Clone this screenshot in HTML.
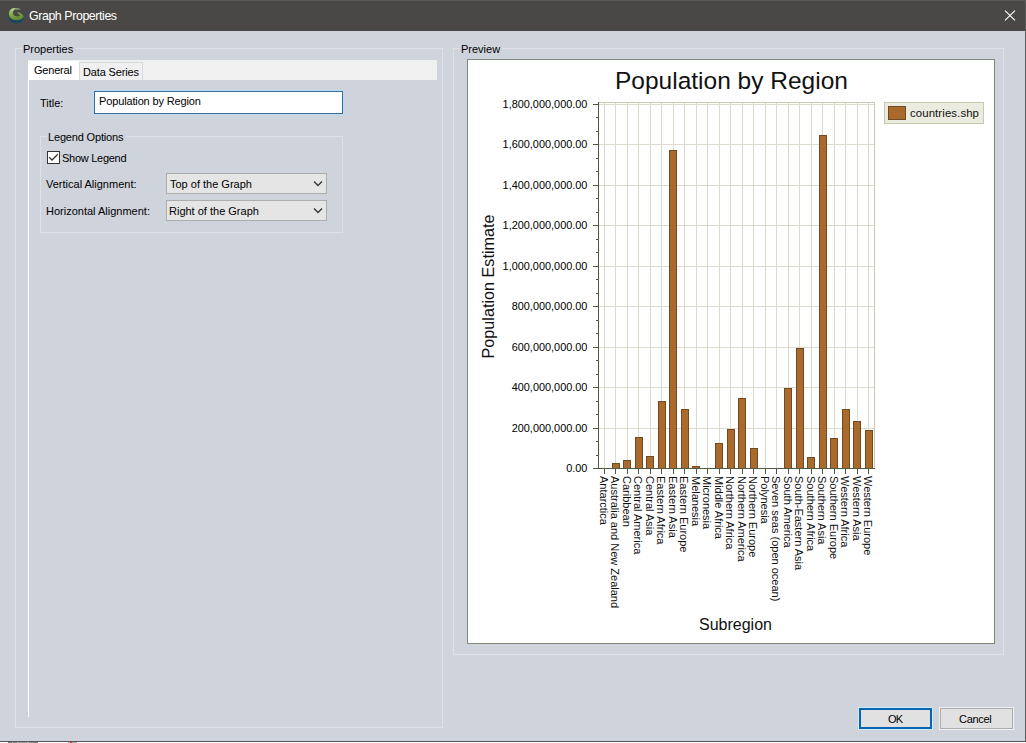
<!DOCTYPE html>
<html><head><meta charset="utf-8">
<style>
html,body{margin:0;padding:0}
body{width:1026px;height:743px;overflow:hidden;position:relative;background:#cfd3dc;font-family:"Liberation Sans",sans-serif;font-size:11px;color:#000}
.a{position:absolute}
.t{position:absolute;white-space:nowrap;line-height:11px;font-size:11px}
#titlebar{left:0;top:0;width:1026px;height:31px;background:#4a4846;border-top:1px solid #5c5b5a;box-sizing:border-box}
.gb{position:absolute;border:1px solid #dde0e6;box-sizing:border-box}
.gbl{position:absolute;background:#cfd3dc;padding:0 2px 0 1px;white-space:nowrap;line-height:11px}
.combo{position:absolute;background:#e5e5e5;border:1px solid #adadad;box-sizing:border-box}
.btn{position:absolute;box-sizing:border-box;background:#e1e1e1;text-align:center}
</style></head><body>
<div id="titlebar" class="a">
  <svg class="a" style="left:5px;top:3px" width="24" height="24" viewBox="0 0 24 24">
    <defs><linearGradient id="ig" x1="0" y1="0" x2="0.3" y2="1"><stop offset="0" stop-color="#c4d4a8"/><stop offset="0.45" stop-color="#8fb055"/><stop offset="1" stop-color="#5f8a30"/></linearGradient></defs>
    <path d="M3.4 10.5 Q3.3 16.5 7.5 18.8 Q11 20.4 15 18.8 Q18.6 16.8 18.8 12.5 Q17.5 16 12.5 16.4 Q6.5 16.6 3.4 10.5 Z" fill="#16475e"/>
    <path d="M8.4 4 L15.2 4.7 L15.4 5.6 L9.6 5.6 Q7.6 7.4 7.8 9.8 Q8.8 12.4 12 12.5 Q14.2 12.4 15.2 11.4 L12.3 8.6 L12.9 8.1 Q17 9.6 18.8 12.2 Q17.6 15.7 12.2 16.1 Q6.3 16.1 4.3 12.2 Q3.3 8.2 5 6 Q6.5 4.4 8.4 4 Z" fill="url(#ig)"/>
  </svg>
  <div class="t" style="left:29px;top:9px;font-size:12.4px;line-height:13px;letter-spacing:-0.42px;color:#fff">Graph Properties</div>
  <svg class="a" style="left:1000px;top:5px" width="20" height="20"><path d="M5 4.6 L15 14.3 M15 4.6 L5 14.3" stroke="#fff" stroke-width="1.1"/></svg>
</div>
<div class="a" style="left:1025px;top:0;width:1px;height:741px;background:#5a5a5a"></div>
<div class="a" style="left:0;top:741px;width:1026px;height:1px;background:#555"></div>
<div class="a" style="left:0;top:742px;width:1026px;height:1px;background:#fff"></div>
<div class="a" style="left:8px;top:742px;width:30px;height:1px;background:linear-gradient(90deg,#777 0 4px,#ccc 4px 5px,#888 5px 9px,#bbb 9px 11px,#999 11px 19px,#ccc 19px 21px,#888 21px 30px)"></div>
<div class="a" style="left:68px;top:742px;width:9px;height:1px;background:linear-gradient(90deg,#bbb 0 2px,#d33 2px 4px,#aaa 4px 9px)"></div>

<!-- Properties group -->
<div class="gb" style="left:15px;top:48px;width:428px;height:680px"></div>
<div class="gbl" style="left:22px;top:44px">Properties</div>
<!-- tab strip -->
<div class="a" style="left:28px;top:60px;width:409px;height:20px;background:#f0f0f0"></div>
<div class="a" style="left:28px;top:61px;width:51px;height:19px;background:#fff"></div>
<div class="a" style="left:79px;top:62px;width:64px;height:18px;background:#f0f0f0;border:1px solid #dadada;border-bottom:none;box-sizing:border-box"></div>
<div class="t" style="left:34px;top:65px;letter-spacing:-0.2px">General</div>
<div class="t" style="left:83px;top:67px;letter-spacing:-0.15px">Data Series</div>
<div class="a" style="left:28px;top:80px;width:1px;height:637px;background:#fff"></div>
<div class="t" style="left:40px;top:98px">Title:</div>
<div class="a" style="left:93px;top:90px;width:251px;height:25px;background:#b9ddf7"></div>
<div class="a" style="left:94px;top:91px;width:249px;height:23px;background:#fff;border:1px solid #3a6b99;box-sizing:border-box"></div>
<div class="t" style="left:99px;top:96px;letter-spacing:-0.14px">Population by Region</div>

<div class="gb" style="left:40px;top:136px;width:303px;height:97px"></div>
<div class="gbl" style="left:47px;top:132px;letter-spacing:-0.17px">Legend Options</div>
<div class="a" style="left:47px;top:151px;width:13px;height:13px;background:#fff;border:1px solid #333;box-sizing:border-box"></div>
<svg class="a" style="left:47px;top:151px" width="13" height="13"><path d="M2.2 6.2 L5 9 L10.8 3.2" stroke="#333" stroke-width="1.25" fill="none"/></svg>
<div class="t" style="left:62px;top:153px;letter-spacing:-0.27px">Show Legend</div>
<div class="t" style="left:46px;top:179px;letter-spacing:0px">Vertical Alignment:</div>
<div class="t" style="left:46px;top:206px">Horizontal Alignment:</div>
<div class="combo" style="left:166px;top:173px;width:161px;height:21px"></div>
<div class="t" style="left:170px;top:179px">Top of the Graph</div>
<svg class="a" style="left:310px;top:179px" width="14" height="10"><path d="M4 2.5 L8 6.5 L12 2.5" stroke="#333" stroke-width="1.25" fill="none"/></svg>
<div class="combo" style="left:166px;top:200px;width:161px;height:21px"></div>
<div class="t" style="left:169px;top:206px">Right of the Graph</div>
<svg class="a" style="left:310px;top:206px" width="14" height="10"><path d="M4 2.5 L8 6.5 L12 2.5" stroke="#333" stroke-width="1.25" fill="none"/></svg>

<!-- Preview group -->
<div class="gb" style="left:453px;top:48px;width:551px;height:607px"></div>
<div class="gbl" style="left:460px;top:44px">Preview</div>

<div id="chart" class="a" style="left:467px;top:59px;width:528px;height:585px;background:#fff;border:1px solid #7f8a78;box-sizing:border-box"></div>

<!--CHART-->
<svg class="a" style="left:0;top:0" width="1026" height="743" viewBox="0 0 1026 743" shape-rendering="crispEdges">
<defs><linearGradient id="pg" x1="0" y1="0" x2="1" y2="1"><stop offset="0" stop-color="#ffffff"/><stop offset="1" stop-color="#fefef8"/></linearGradient></defs>
<rect x="599" y="103" width="275" height="365" fill="#fff"/>
<rect x="604" y="103" width="1" height="365" fill="#dcdccc"/>
<rect x="615" y="103" width="1" height="365" fill="#dcdccc"/>
<rect x="627" y="103" width="1" height="365" fill="#dcdccc"/>
<rect x="638" y="103" width="1" height="365" fill="#dcdccc"/>
<rect x="650" y="103" width="1" height="365" fill="#dcdccc"/>
<rect x="661" y="103" width="1" height="365" fill="#dcdccc"/>
<rect x="673" y="103" width="1" height="365" fill="#dcdccc"/>
<rect x="684" y="103" width="1" height="365" fill="#dcdccc"/>
<rect x="696" y="103" width="1" height="365" fill="#dcdccc"/>
<rect x="707" y="103" width="1" height="365" fill="#dcdccc"/>
<rect x="719" y="103" width="1" height="365" fill="#dcdccc"/>
<rect x="730" y="103" width="1" height="365" fill="#dcdccc"/>
<rect x="742" y="103" width="1" height="365" fill="#dcdccc"/>
<rect x="753" y="103" width="1" height="365" fill="#dcdccc"/>
<rect x="765" y="103" width="1" height="365" fill="#dcdccc"/>
<rect x="776" y="103" width="1" height="365" fill="#dcdccc"/>
<rect x="788" y="103" width="1" height="365" fill="#dcdccc"/>
<rect x="799" y="103" width="1" height="365" fill="#dcdccc"/>
<rect x="811" y="103" width="1" height="365" fill="#dcdccc"/>
<rect x="822" y="103" width="1" height="365" fill="#dcdccc"/>
<rect x="834" y="103" width="1" height="365" fill="#dcdccc"/>
<rect x="845" y="103" width="1" height="365" fill="#dcdccc"/>
<rect x="857" y="103" width="1" height="365" fill="#dcdccc"/>
<rect x="868" y="103" width="1" height="365" fill="#dcdccc"/>
<rect x="599" y="428" width="275" height="1" fill="#dcdccc"/>
<rect x="599" y="387" width="275" height="1" fill="#dcdccc"/>
<rect x="599" y="347" width="275" height="1" fill="#dcdccc"/>
<rect x="599" y="306" width="275" height="1" fill="#dcdccc"/>
<rect x="599" y="266" width="275" height="1" fill="#dcdccc"/>
<rect x="599" y="225" width="275" height="1" fill="#dcdccc"/>
<rect x="599" y="185" width="275" height="1" fill="#dcdccc"/>
<rect x="599" y="144" width="275" height="1" fill="#dcdccc"/>
<rect x="599" y="104" width="275" height="1" fill="#dcdccc"/>
<rect x="598" y="102" width="277" height="1" fill="#c9c9b4"/>
<rect x="874" y="102" width="1" height="366" fill="#c9c9b4"/>
<rect x="612" y="463" width="8" height="5" fill="#6f4a24"/>
<rect x="613" y="464" width="6" height="4" fill="#aa6a2c"/>
<rect x="623" y="460" width="8" height="8" fill="#6f4a24"/>
<rect x="624" y="461" width="6" height="7" fill="#aa6a2c"/>
<rect x="635" y="437" width="8" height="31" fill="#6f4a24"/>
<rect x="636" y="438" width="6" height="30" fill="#aa6a2c"/>
<rect x="646" y="456" width="8" height="12" fill="#6f4a24"/>
<rect x="647" y="457" width="6" height="11" fill="#aa6a2c"/>
<rect x="658" y="401" width="8" height="67" fill="#6f4a24"/>
<rect x="659" y="402" width="6" height="66" fill="#aa6a2c"/>
<rect x="669" y="150" width="8" height="318" fill="#6f4a24"/>
<rect x="670" y="151" width="6" height="317" fill="#aa6a2c"/>
<rect x="681" y="409" width="8" height="59" fill="#6f4a24"/>
<rect x="682" y="410" width="6" height="58" fill="#aa6a2c"/>
<rect x="692" y="466" width="8" height="2" fill="#6f4a24"/>
<rect x="693" y="467" width="6" height="1" fill="#aa6a2c"/>
<rect x="715" y="443" width="8" height="25" fill="#6f4a24"/>
<rect x="716" y="444" width="6" height="24" fill="#aa6a2c"/>
<rect x="727" y="429" width="8" height="39" fill="#6f4a24"/>
<rect x="728" y="430" width="6" height="38" fill="#aa6a2c"/>
<rect x="738" y="398" width="8" height="70" fill="#6f4a24"/>
<rect x="739" y="399" width="6" height="69" fill="#aa6a2c"/>
<rect x="750" y="448" width="8" height="20" fill="#6f4a24"/>
<rect x="751" y="449" width="6" height="19" fill="#aa6a2c"/>
<rect x="784" y="388" width="8" height="80" fill="#6f4a24"/>
<rect x="785" y="389" width="6" height="79" fill="#aa6a2c"/>
<rect x="796" y="348" width="8" height="120" fill="#6f4a24"/>
<rect x="797" y="349" width="6" height="119" fill="#aa6a2c"/>
<rect x="807" y="457" width="8" height="11" fill="#6f4a24"/>
<rect x="808" y="458" width="6" height="10" fill="#aa6a2c"/>
<rect x="819" y="135" width="8" height="333" fill="#6f4a24"/>
<rect x="820" y="136" width="6" height="332" fill="#aa6a2c"/>
<rect x="830" y="438" width="8" height="30" fill="#6f4a24"/>
<rect x="831" y="439" width="6" height="29" fill="#aa6a2c"/>
<rect x="842" y="409" width="8" height="59" fill="#6f4a24"/>
<rect x="843" y="410" width="6" height="58" fill="#aa6a2c"/>
<rect x="853" y="421" width="8" height="47" fill="#6f4a24"/>
<rect x="854" y="422" width="6" height="46" fill="#aa6a2c"/>
<rect x="865" y="430" width="8" height="38" fill="#6f4a24"/>
<rect x="866" y="431" width="6" height="37" fill="#aa6a2c"/>
<rect x="598" y="102" width="1" height="367" fill="#4e5a3e"/>
<rect x="593" y="468" width="282" height="1" fill="#4e5a3e"/>
<rect x="593" y="468" width="5" height="1" fill="#4e5a3e"/>
<rect x="593" y="428" width="5" height="1" fill="#4e5a3e"/>
<rect x="593" y="387" width="5" height="1" fill="#4e5a3e"/>
<rect x="593" y="347" width="5" height="1" fill="#4e5a3e"/>
<rect x="593" y="306" width="5" height="1" fill="#4e5a3e"/>
<rect x="593" y="266" width="5" height="1" fill="#4e5a3e"/>
<rect x="593" y="225" width="5" height="1" fill="#4e5a3e"/>
<rect x="593" y="185" width="5" height="1" fill="#4e5a3e"/>
<rect x="593" y="144" width="5" height="1" fill="#4e5a3e"/>
<rect x="593" y="104" width="5" height="1" fill="#4e5a3e"/>
<rect x="596" y="455" width="2" height="1" fill="#4e5a3e"/>
<rect x="596" y="441" width="2" height="1" fill="#4e5a3e"/>
<rect x="596" y="414" width="2" height="1" fill="#4e5a3e"/>
<rect x="596" y="401" width="2" height="1" fill="#4e5a3e"/>
<rect x="596" y="374" width="2" height="1" fill="#4e5a3e"/>
<rect x="596" y="360" width="2" height="1" fill="#4e5a3e"/>
<rect x="596" y="333" width="2" height="1" fill="#4e5a3e"/>
<rect x="596" y="320" width="2" height="1" fill="#4e5a3e"/>
<rect x="596" y="293" width="2" height="1" fill="#4e5a3e"/>
<rect x="596" y="279" width="2" height="1" fill="#4e5a3e"/>
<rect x="596" y="252" width="2" height="1" fill="#4e5a3e"/>
<rect x="596" y="239" width="2" height="1" fill="#4e5a3e"/>
<rect x="596" y="212" width="2" height="1" fill="#4e5a3e"/>
<rect x="596" y="198" width="2" height="1" fill="#4e5a3e"/>
<rect x="596" y="171" width="2" height="1" fill="#4e5a3e"/>
<rect x="596" y="158" width="2" height="1" fill="#4e5a3e"/>
<rect x="596" y="131" width="2" height="1" fill="#4e5a3e"/>
<rect x="596" y="117" width="2" height="1" fill="#4e5a3e"/>
<rect x="604" y="469" width="1" height="5" fill="#4e5a3e"/>
<rect x="615" y="469" width="1" height="5" fill="#4e5a3e"/>
<rect x="627" y="469" width="1" height="5" fill="#4e5a3e"/>
<rect x="638" y="469" width="1" height="5" fill="#4e5a3e"/>
<rect x="650" y="469" width="1" height="5" fill="#4e5a3e"/>
<rect x="661" y="469" width="1" height="5" fill="#4e5a3e"/>
<rect x="673" y="469" width="1" height="5" fill="#4e5a3e"/>
<rect x="684" y="469" width="1" height="5" fill="#4e5a3e"/>
<rect x="696" y="469" width="1" height="5" fill="#4e5a3e"/>
<rect x="707" y="469" width="1" height="5" fill="#4e5a3e"/>
<rect x="719" y="469" width="1" height="5" fill="#4e5a3e"/>
<rect x="730" y="469" width="1" height="5" fill="#4e5a3e"/>
<rect x="742" y="469" width="1" height="5" fill="#4e5a3e"/>
<rect x="753" y="469" width="1" height="5" fill="#4e5a3e"/>
<rect x="765" y="469" width="1" height="5" fill="#4e5a3e"/>
<rect x="776" y="469" width="1" height="5" fill="#4e5a3e"/>
<rect x="788" y="469" width="1" height="5" fill="#4e5a3e"/>
<rect x="799" y="469" width="1" height="5" fill="#4e5a3e"/>
<rect x="811" y="469" width="1" height="5" fill="#4e5a3e"/>
<rect x="822" y="469" width="1" height="5" fill="#4e5a3e"/>
<rect x="834" y="469" width="1" height="5" fill="#4e5a3e"/>
<rect x="845" y="469" width="1" height="5" fill="#4e5a3e"/>
<rect x="857" y="469" width="1" height="5" fill="#4e5a3e"/>
<rect x="868" y="469" width="1" height="5" fill="#4e5a3e"/>
</svg>
<svg class="a" style="left:0;top:0" width="1026" height="743" viewBox="0 0 1026 743" font-family="Liberation Sans" fill="#111">
<text x="615" y="88.5" font-size="24.5">Population by Region</text>
<text x="587.4" y="472" font-size="10.9" fill="#000" text-anchor="end">0.00</text>
<text x="587.4" y="432" font-size="10.9" fill="#000" text-anchor="end">200,000,000.00</text>
<text x="587.4" y="391" font-size="10.9" fill="#000" text-anchor="end">400,000,000.00</text>
<text x="587.4" y="351" font-size="10.9" fill="#000" text-anchor="end">600,000,000.00</text>
<text x="587.4" y="310" font-size="10.9" fill="#000" text-anchor="end">800,000,000.00</text>
<text x="587.4" y="270" font-size="10.9" fill="#000" text-anchor="end">1,000,000,000.00</text>
<text x="587.4" y="229" font-size="10.9" fill="#000" text-anchor="end">1,200,000,000.00</text>
<text x="587.4" y="189" font-size="10.9" fill="#000" text-anchor="end">1,400,000,000.00</text>
<text x="587.4" y="148" font-size="10.9" fill="#000" text-anchor="end">1,600,000,000.00</text>
<text x="587.4" y="108" font-size="10.9" fill="#000" text-anchor="end">1,800,000,000.00</text>
<text transform="translate(600,476) rotate(90)" x="0" y="0" font-size="11">Antarctica</text>
<text transform="translate(611,476) rotate(90)" x="0" y="0" font-size="11">Australia and New Zealand</text>
<text transform="translate(623,476) rotate(90)" x="0" y="0" font-size="11">Caribbean</text>
<text transform="translate(634,476) rotate(90)" x="0" y="0" font-size="11">Central America</text>
<text transform="translate(646,476) rotate(90)" x="0" y="0" font-size="11">Central Asia</text>
<text transform="translate(657,476) rotate(90)" x="0" y="0" font-size="11">Eastern Africa</text>
<text transform="translate(669,476) rotate(90)" x="0" y="0" font-size="11">Eastern Asia</text>
<text transform="translate(680,476) rotate(90)" x="0" y="0" font-size="11">Eastern Europe</text>
<text transform="translate(692,476) rotate(90)" x="0" y="0" font-size="11">Melanesia</text>
<text transform="translate(703,476) rotate(90)" x="0" y="0" font-size="11">Micronesia</text>
<text transform="translate(715,476) rotate(90)" x="0" y="0" font-size="11">Middle Africa</text>
<text transform="translate(726,476) rotate(90)" x="0" y="0" font-size="11">Northern Africa</text>
<text transform="translate(738,476) rotate(90)" x="0" y="0" font-size="11">Northern America</text>
<text transform="translate(749,476) rotate(90)" x="0" y="0" font-size="11">Northern Europe</text>
<text transform="translate(761,476) rotate(90)" x="0" y="0" font-size="11">Polynesia</text>
<text transform="translate(772,476) rotate(90)" x="0" y="0" font-size="11">Seven seas (open ocean)</text>
<text transform="translate(784,476) rotate(90)" x="0" y="0" font-size="11">South America</text>
<text transform="translate(795,476) rotate(90)" x="0" y="0" font-size="11">South-Eastern Asia</text>
<text transform="translate(807,476) rotate(90)" x="0" y="0" font-size="11">Southern Africa</text>
<text transform="translate(818,476) rotate(90)" x="0" y="0" font-size="11">Southern Asia</text>
<text transform="translate(830,476) rotate(90)" x="0" y="0" font-size="11">Southern Europe</text>
<text transform="translate(841,476) rotate(90)" x="0" y="0" font-size="11">Western Africa</text>
<text transform="translate(853,476) rotate(90)" x="0" y="0" font-size="11">Western Asia</text>
<text transform="translate(864,476) rotate(90)" x="0" y="0" font-size="11">Western Europe</text>
<text transform="translate(494,358.5) rotate(-90)" x="0" y="0" font-size="16.2">Population Estimate</text>
<text x="699" y="630" font-size="16">Subregion</text>
</svg>
<div class="a" style="left:884px;top:102px;width:100px;height:22px;box-sizing:border-box;border:1px solid #c9c9b0;background:#ebebe0"></div>
<div class="a" style="left:888px;top:106px;width:18px;height:14px;box-sizing:border-box;border:1px solid #6f4a24;background:#aa6a2c"></div>
<div class="t" style="left:910px;top:107px;font-size:11.4px;letter-spacing:0.1px;line-height:12px;color:#111">countries.shp</div>
<!--/CHART-->
<!-- buttons -->
<div class="btn" style="left:858px;top:707px;width:75px;height:23px;border:1px solid #cdeeff;"><div style="position:absolute;left:0;top:0;right:0;bottom:0;border:2px solid #0a64b4"></div><div class="t" style="left:29px;top:6px;letter-spacing:-0.8px">OK</div></div>
<div class="btn" style="left:939px;top:707px;width:75px;height:23px;border:1px solid #eef0f4;"><div style="position:absolute;left:0;top:0;right:0;bottom:0;border:1px solid #adadad"></div><div class="t" style="left:19px;top:6px;letter-spacing:-0.3px">Cancel</div></div>
</body></html>
